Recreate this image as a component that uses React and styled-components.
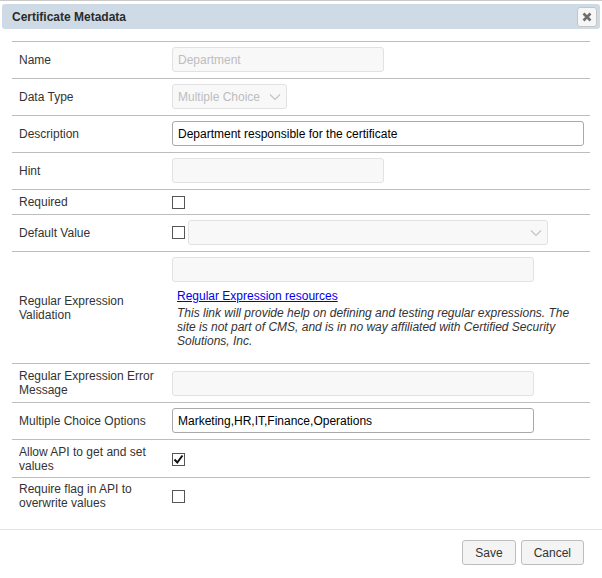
import React from "react";
import styled, { createGlobalStyle } from "styled-components";

const GlobalStyle = createGlobalStyle`
  html, body {
    margin: 0;
    padding: 0;
    background: #fff;
  }
  body {
    font-family: "Liberation Sans", Arial, sans-serif;
    font-size: 12px;
    color: #333;
  }
`;

const Dialog = styled.div`
  width: 602px;
  height: 578px;
  box-sizing: border-box;
  border-top: 1px solid #c9c9c9;
  padding: 3px 2px 0;
  display: flex;
  flex-direction: column;
  overflow: hidden;
`;

const TitleBar = styled.div`
  flex-shrink: 0;
  height: 25px;
  background: #cedbe7;
  border-radius: 3px;
  display: flex;
  align-items: center;
  justify-content: space-between;
  padding: 0 3px 0 10px;
`;

const Title = styled.span`
  font-weight: bold;
  font-size: 12px;
  color: #2b2b2b;
`;

const CloseButton = styled.button`
  width: 20px;
  height: 20px;
  padding: 0;
  border: 1px solid #c5c5c5;
  border-radius: 3px;
  background: #f6f6f6;
  display: flex;
  align-items: center;
  justify-content: center;
`;

const Body = styled.div`
  flex: 1;
  padding: 12px 10px 0;
`;

const Table = styled.div`
  border-top: 1px solid #bdbdbd;
`;

const Row = styled.div`
  display: grid;
  grid-template-columns: 160px 1fr;
  align-items: center;
  border-bottom: ${(p) => (p.$last ? "none" : "1px solid #bdbdbd")};
  padding: ${(p) => p.$pad || "5px 0 6px"};
`;

const Label = styled.div`
  padding: 0 12px 0 7px;
  line-height: 14px;
  color: #333;
`;

const Field = styled.div`
  display: flex;
  align-items: center;
  gap: 3px;
`;

const Input = styled.div`
  box-sizing: border-box;
  width: ${(p) => p.$w}px;
  height: 25px;
  border: 1px solid ${(p) => (p.$disabled ? "#e2e2e2" : "#a9a9a9")};
  background: ${(p) => (p.$disabled ? "#f8f8f8" : "#fff")};
  border-radius: 3px;
  padding: 0 5px;
  display: flex;
  align-items: center;
  justify-content: space-between;
  color: ${(p) => (p.$muted ? "#bdbdbd" : "#000")};
  white-space: nowrap;
`;

const Box = styled.span`
  box-sizing: border-box;
  width: 13px;
  height: 13px;
  border: 1px solid #555;
  background: #fff;
  display: inline-flex;
  align-items: center;
  justify-content: center;
`;

const Stack = styled.div`
  display: flex;
  flex-direction: column;
  align-items: flex-start;
  padding: 5px 0 15px;
`;

const HelpLink = styled.a`
  color: #0000ee;
  text-decoration: underline;
  margin: 7px 0 0 5px;
  line-height: 14px;
`;

const HelpText = styled.p`
  margin: 3px 0 0 5px;
  font-style: italic;
  line-height: 14px;
  width: 400px;
  color: #333;
`;

const Footer = styled.div`
  flex-shrink: 0;
  border-top: 1px solid #e3e3e3;
  margin: 0 -2px;
  padding: 10px 18px 0;
  height: 49px;
  box-sizing: border-box;
  display: flex;
  justify-content: flex-end;
  align-items: flex-start;
  gap: 5px;
`;

const Button = styled.button`
  height: 25px;
  padding: 0 12px;
  border: 1px solid #bdbdbd;
  border-radius: 3px;
  background: #f4f4f4;
  font-family: "Liberation Sans", Arial, sans-serif;
  font-size: 12px;
  color: #333;
`;

const Chevron = () => (
  <svg width="12" height="8" viewBox="0 0 12 8">
    <path d="M1 1.5 L6 6.5 L11 1.5" fill="none" stroke="#c4c4c4" strokeWidth="1.2" />
  </svg>
);

const Check = () => (
  <svg width="11" height="11" viewBox="0 0 11 11">
    <path d="M1.5 5.5 L4.3 8.5 L9.5 1.5" fill="none" stroke="#111" strokeWidth="2" />
  </svg>
);

const Checkbox = ({ checked }) => <Box>{checked && <Check />}</Box>;

export default function App() {
  return (
    <>
      <GlobalStyle />
      <Dialog>
        <TitleBar>
          <Title>Certificate Metadata</Title>
          <CloseButton aria-label="close">
            <svg width="10" height="10" viewBox="0 0 10 10">
              <path d="M1.5 1.5 L8.5 8.5 M8.5 1.5 L1.5 8.5" stroke="#6d6d6d" strokeWidth="2.6" />
            </svg>
          </CloseButton>
        </TitleBar>
        <Body>
          <Table>
            <Row>
              <Label>Name</Label>
              <Field>
                <Input $w={212} $disabled $muted>Department</Input>
              </Field>
            </Row>
            <Row>
              <Label>Data Type</Label>
              <Field>
                <Input $w={115} $disabled $muted>
                  Multiple Choice <Chevron />
                </Input>
              </Field>
            </Row>
            <Row>
              <Label>Description</Label>
              <Field>
                <Input $w={412}>Department responsible for the certificate</Input>
              </Field>
            </Row>
            <Row>
              <Label>Hint</Label>
              <Field>
                <Input $w={212} $disabled />
              </Field>
            </Row>
            <Row $pad="5px 0 5px">
              <Label>Required</Label>
              <Field>
                <Checkbox />
              </Field>
            </Row>
            <Row>
              <Label>Default Value</Label>
              <Field>
                <Checkbox />
                <Input $w={360} $disabled>
                  <span />
                  <Chevron />
                </Input>
              </Field>
            </Row>
            <Row $pad="0">
              <Label>Regular Expression Validation</Label>
              <Stack>
                <Input $w={362} $disabled />
                <HelpLink href="#">Regular Expression resources</HelpLink>
                <HelpText>
                  This link will provide help on defining and testing regular expressions. The
                  site is not part of CMS, and is in no way affiliated with Certified Security
                  Solutions, Inc.
                </HelpText>
              </Stack>
            </Row>
            <Row $pad="5px 0 5px">
              <Label>Regular Expression Error Message</Label>
              <Field>
                <Input $w={362} $disabled />
              </Field>
            </Row>
            <Row>
              <Label>Multiple Choice Options</Label>
              <Field>
                <Input $w={362}>Marketing,HR,IT,Finance,Operations</Input>
              </Field>
            </Row>
            <Row $pad="5px 0 4px">
              <Label>Allow API to get and set values</Label>
              <Field>
                <Checkbox checked />
              </Field>
            </Row>
            <Row $pad="4px 0 18px" $last>
              <Label>Require flag in API to overwrite values</Label>
              <Field>
                <Checkbox />
              </Field>
            </Row>
          </Table>
        </Body>
        <Footer>
          <Button>Save</Button>
          <Button>Cancel</Button>
        </Footer>
      </Dialog>
    </>
  );
}
